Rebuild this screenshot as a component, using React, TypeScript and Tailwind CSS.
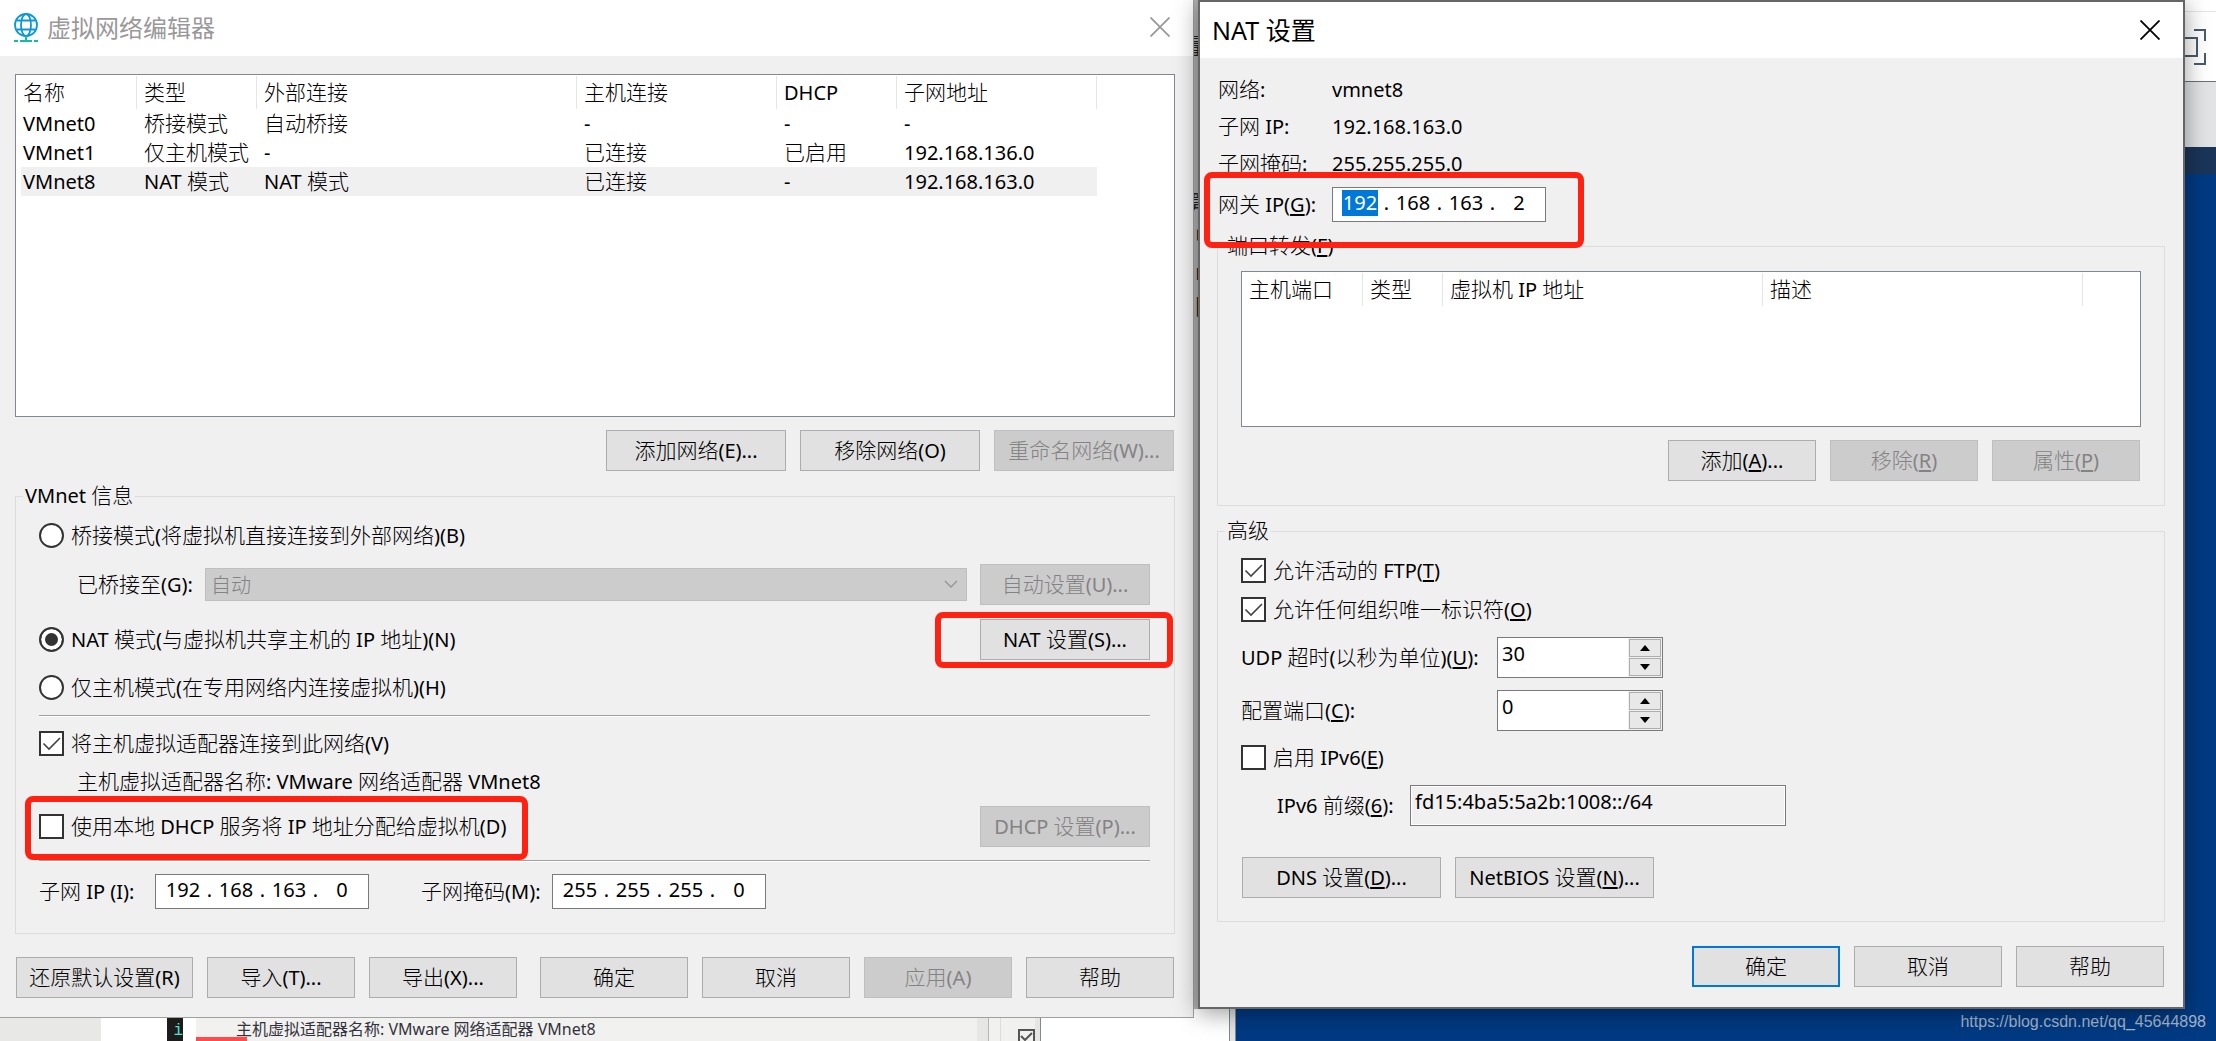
import type { ReactNode } from 'react';

/** Splits a caption into Chinese and Latin runs; "_X" underlines the access key X. */
function Caption({ text }: { text: string }) {
  const runs = text.split(/([\u4e00-\u9fff]+)/).filter(Boolean);
  return (
    <span className="whitespace-pre">
      {runs.map((run, i) => {
        if (/[\u4e00-\u9fff]/.test(run)) {
          return (
            <span key={i} className="font-['Noto_Sans_CJK_SC',sans-serif] text-[21px] leading-none font-light">
              {run}
            </span>
          );
        }
        const at = run.indexOf('_');
        if (at < 0) return <span key={i}>{run}</span>;
        return (
          <span key={i}>
            {run.slice(0, at)}
            <u className="underline-offset-2">{run[at + 1]}</u>
            {run.slice(at + 2)}
          </span>
        );
      })}
    </span>
  );
}

function Button({ text, width, disabled, primary }: { text: string; width: string; disabled?: boolean; primary?: boolean }) {
  const look = disabled
    ? 'border border-[#bfbfbf] bg-[#cccccc] text-[#838383]'
    : primary
      ? 'border-2 border-[#0078d7] bg-[#e1e1e1]'
      : 'border border-[#adadad] bg-[#e1e1e1]';
  return (
    <button type="button" disabled={disabled} className={`flex h-[41px] shrink-0 items-center justify-center ${width} ${look}`}>
      <Caption text={text} />
    </button>
  );
}

function Highlight({ place }: { place: string }) {
  return <span className={`pointer-events-none absolute z-10 rounded-lg border-6 border-[#ff2212] ${place}`} />;
}

function Radio({ text, checked }: { text: string; checked?: boolean }) {
  return (
    <label className="flex h-[25px] items-center gap-[7px]">
      <input
        type="radio"
        name="vmnet-mode"
        defaultChecked={checked}
        className="size-[25px] shrink-0 appearance-none rounded-full border-2 border-[#333333] bg-white checked:bg-[#333333] checked:shadow-[inset_0_0_0_4px_white]"
      />
      <Caption text={text} />
    </label>
  );
}

function Check({ text, checked, children }: { text: string; checked?: boolean; children?: ReactNode }) {
  return (
    <label className="relative flex h-[25px] w-fit items-center gap-[7px]">
      <span className="relative size-[25px] shrink-0">
        <input type="checkbox" defaultChecked={checked} className="peer block size-full appearance-none border-2 border-[#333333] bg-white" />
        <svg viewBox="0 0 25 25" className="pointer-events-none absolute inset-0 hidden size-full peer-checked:block" fill="none" stroke="#444" strokeWidth="1.6">
          <path d="M4.5 12.5 L10 18 L21 7" />
        </svg>
      </span>
      <Caption text={text} />
      {children}
    </label>
  );
}

function IpField({ label, octets, selected }: { label: string; octets: string[]; selected?: number }) {
  return (
    <div role="group" aria-label={label} className="flex h-[35px] w-[214px] shrink-0 items-center border border-[#7a7a7a] bg-white px-[7px] pb-1">
      {octets.map((o, i) => (
        <span key={i} className="flex items-center">
          {i > 0 && <span className="w-[13px] text-center">.</span>}
          <input
            aria-label={`${label} ${i + 1}`}
            defaultValue={o}
            className={
              i === selected
                ? 'mx-[2px] h-[26px] w-9 bg-[#0078d7] text-center text-white outline-none'
                : 'h-[26px] w-10 text-center outline-none'
            }
          />
        </span>
      ))}
    </div>
  );
}

function Spinner({ id, value }: { id: string; value: string }) {
  return (
    <div className="flex h-[41px] w-[166px] border border-[#7a7a7a] bg-white">
      <input id={id} defaultValue={value} className="w-full min-w-0 flex-1 pb-2 pl-1 outline-none" />
      <div className="flex w-[34px] flex-col gap-px bg-[#f0f0f0] p-px">
        <button type="button" aria-label="增加" className="flex flex-1 items-center justify-center border border-[#adadad] bg-[#e8e8e8]">
          <svg viewBox="0 0 10 6" className="h-[6px] w-[10px]"><path d="M0 6 L5 0 L10 6Z" /></svg>
        </button>
        <button type="button" aria-label="减少" className="flex flex-1 items-center justify-center border border-[#adadad] bg-[#e8e8e8]">
          <svg viewBox="0 0 10 6" className="h-[6px] w-[10px]"><path d="M0 0 L5 6 L10 0Z" /></svg>
        </button>
      </div>
    </div>
  );
}

function CloseIcon() {
  return (
    <svg viewBox="0 0 20 20" className="size-5" fill="none" stroke="currentColor" strokeWidth="1.8">
      <path d="M0.5 0.5 L19.5 19.5 M19.5 0.5 L0.5 19.5" />
    </svg>
  );
}

function NetworkIcon() {
  return (
    <svg viewBox="0 0 24 29" className="h-[29px] w-6 shrink-0" fill="none" strokeWidth="1.8">
      <g stroke="#0c98d6">
        <circle cx="12" cy="12" r="11" />
        <ellipse cx="12" cy="12" rx="5" ry="11" />
        <path d="M2.5 7.5 H21.5 M2.5 16.5 H21.5" />
      </g>
      <path stroke="#0bc0a4" strokeWidth="2" d="M12 23 V28 M6 28 H18 M0 28 H4 M20 28 H24" />
    </svg>
  );
}

function Divider() {
  return <hr className="h-[2px] border-t border-b border-t-[#a0a0a0] border-b-white" />;
}

function HeadCell({ text, width }: { text: string; width: string }) {
  return (
    <th className={`h-[33px] border-r border-[#e5e5e5] pl-[7px] text-left font-normal ${width}`}>
      <Caption text={text} />
    </th>
  );
}

const networks = [
  ['VMnet0', '桥接模式', '自动桥接', '-', '-', '-'],
  ['VMnet1', '仅主机模式', '-', '已连接', '已启用', '192.168.136.0'],
  ['VMnet8', 'NAT 模式', 'NAT 模式', '已连接', '-', '192.168.163.0'],
];

function NetworkEditor() {
  return (
    <section className="min-w-0 border-r border-b border-[#a0a0a0] bg-[#f0f0f0]">
      <header className="flex h-14 items-center gap-[9px] bg-white pr-[23px] pb-[2px] pl-[14px] text-[#999999]">
        <NetworkIcon />
        <h1 className="flex-1 font-['Noto_Sans_CJK_SC',sans-serif] text-2xl leading-6">虚拟网络编辑器</h1>
        <button type="button" aria-label="关闭"><CloseIcon /></button>
      </header>

      <div className="pt-[18px] pr-[18px] pb-[19px] pl-[15px]">
        <div className="h-[343px] border border-[#828790] bg-white pt-px">
          <table className="table-fixed border-separate border-spacing-0">
            <thead>
              <tr>
                <HeadCell text="名称" width="w-[121px]" />
                <HeadCell text="类型" width="w-[120px]" />
                <HeadCell text="外部连接" width="w-[320px]" />
                <HeadCell text="主机连接" width="w-[200px]" />
                <HeadCell text="DHCP" width="w-[120px]" />
                <HeadCell text="子网地址" width="w-[200px]" />
              </tr>
            </thead>
            <tbody>
              {networks.map((row, r) => (
                <tr key={row[0]} className={r === 2 ? 'bg-[#f0f0f0]' : ''}>
                  {row.map((cell, c) => (
                    <td key={c} className={`h-[29px] ${c === 0 ? 'border-l-5 border-white pl-[2px]' : 'pl-[7px]'}`}>
                      <Caption text={cell} />
                    </td>
                  ))}
                </tr>
              ))}
            </tbody>
          </table>
        </div>

        <div className="mt-[13px] flex justify-end gap-[14px] pr-px">
          <Button text="添加网络(E)..." width="w-[180px]" />
          <Button text="移除网络(O)" width="w-[180px]" />
          <Button text="重命名网络(W)..." width="w-[180px]" disabled />
        </div>

        <fieldset className="mt-[13px] border border-[#dcdcdc] pr-6 pb-6 pl-[23px]">
          <legend className="-ml-4 px-[2px]"><Caption text="VMnet 信息" /></legend>
          <div className="pt-[15px]">
            <Radio text="桥接模式(将虚拟机直接连接到外部网络)(B)" />
          </div>
          <div className="mt-4 flex items-center pl-[38px]">
            <label htmlFor="bridge" className="w-[128px]"><Caption text="已桥接至(G):" /></label>
            <div className="relative mr-[13px] flex-1">
              <select
                id="bridge"
                disabled
                className="block h-[33px] w-full appearance-none border border-[#bfbfbf] bg-[#cccccc] pl-[5px] font-['Noto_Sans_CJK_SC',sans-serif] text-[20px] leading-6 font-light text-[#838383] opacity-100"
              >
                <option>自动</option>
              </select>
              <svg viewBox="0 0 14 8" className="pointer-events-none absolute top-3 right-[9px] h-2 w-[14px]" fill="none" stroke="#959595" strokeWidth="1.4">
                <path d="M1 1 L7 7 L13 1" />
              </svg>
            </div>
            <Button text="自动设置(U)..." width="w-[170px]" disabled />
          </div>
          <div className="mt-[14px] flex items-center justify-between">
            <Radio text="NAT 模式(与虚拟机共享主机的 IP 地址)(N)" checked />
            <div className="relative">
              <Button text="NAT 设置(S)..." width="w-[170px]" />
              <Highlight place="-top-[7px] -right-[23px] -bottom-2 -left-[45px]" />
            </div>
          </div>
          <div className="mt-[15px] mb-[15px]">
            <Radio text="仅主机模式(在专用网络内连接虚拟机)(H)" />
          </div>
          <Divider />
          <div className="mt-[14px]">
            <Check text="将主机虚拟适配器连接到此网络(V)" checked />
          </div>
          <p className="mt-[14px] h-6 pl-[38px]"><Caption text="主机虚拟适配器名称: VMware 网络适配器 VMnet8" /></p>
          <div className="mt-3 mb-[13px] flex items-center justify-between">
            <Check text="使用本地 DHCP 服务将 IP 地址分配给虚拟机(D)">
              <Highlight place="-top-[18px] -right-[22px] -bottom-[21px] -left-[14px]" />
            </Check>
            <Button text="DHCP 设置(P)..." width="w-[170px]" disabled />
          </div>
          <Divider />
          <div className="mt-3 flex items-center">
            <span className="w-[116px]"><Caption text="子网 IP (I):" /></span>
            <IpField label="子网 IP" octets={['192', '168', '163', '0']} />
            <span className="ml-[52px] w-[131px]"><Caption text="子网掩码(M):" /></span>
            <IpField label="子网掩码" octets={['255', '255', '255', '0']} />
          </div>
        </fieldset>

        <footer className="mt-[23px] flex justify-between pr-px pl-px">
          <div className="flex gap-[14px]">
            <Button text="还原默认设置(R)" width="w-[177px]" />
            <Button text="导入(T)..." width="w-[148px]" />
            <Button text="导出(X)..." width="w-[148px]" />
          </div>
          <div className="flex gap-[14px]">
            <Button text="确定" width="w-[148px]" />
            <Button text="取消" width="w-[148px]" />
            <Button text="应用(A)" width="w-[148px]" disabled />
            <Button text="帮助" width="w-[148px]" />
          </div>
        </footer>
      </div>
    </section>
  );
}

function NatSettings() {
  return (
    <section className="z-10 min-w-0 border-2 border-[#666666] bg-[#f0f0f0] shadow-[0_4px_22px_rgba(0,0,0,0.4)]">
      <header className="flex h-14 items-center justify-between bg-white pr-[23px] pl-3 text-[25px]">
        <h2 className="font-['Noto_Sans','Noto_Sans_CJK_SC',sans-serif]">NAT 设置</h2>
        <button type="button" aria-label="关闭"><CloseIcon /></button>
      </header>

      <div className="pt-5 pr-[18px] pb-5 pl-[17px]">
        <dl className="grid grid-cols-[114px_1fr] gap-y-[13px] pl-px">
          <dt className="h-6"><Caption text="网络:" /></dt>
          <dd>vmnet8</dd>
          <dt className="h-6"><Caption text="子网 IP:" /></dt>
          <dd>192.168.163.0</dd>
          <dt className="h-6"><Caption text="子网掩码:" /></dt>
          <dd>255.255.255.0</dd>
        </dl>
        <div className="relative mt-[11px] flex w-fit items-center pl-px">
          <span className="w-[114px]"><Caption text="网关 IP(_G):" /></span>
          <IpField label="网关 IP" octets={['192', '168', '163', '2']} selected={0} />
          <Highlight place="-top-[15px] -right-[38px] -bottom-[26px] -left-[13px]" />
        </div>

        <fieldset className="mt-3 border border-[#dcdcdc] px-[23px] pb-6">
          <legend className="-ml-4 px-[2px]"><Caption text="端口转发(_F)" /></legend>
          <div className="mt-[13px] h-[156px] border border-[#828790] bg-white pt-px">
            <table className="table-fixed border-separate border-spacing-0">
              <thead>
                <tr>
                  <HeadCell text="主机端口" width="w-[121px]" />
                  <HeadCell text="类型" width="w-[80px]" />
                  <HeadCell text="虚拟机 IP 地址" width="w-[320px]" />
                  <HeadCell text="描述" width="w-[320px]" />
                </tr>
              </thead>
            </table>
          </div>
          <div className="mt-[13px] flex justify-end gap-[14px] pr-px">
            <Button text="添加(_A)..." width="w-[148px]" />
            <Button text="移除(_R)" width="w-[148px]" disabled />
            <Button text="属性(_P)" width="w-[148px]" disabled />
          </div>
        </fieldset>

        <fieldset className="mt-[13px] border border-[#dcdcdc] px-[23px] pb-[23px]">
          <legend className="-ml-4 px-[2px]"><Caption text="高级" /></legend>
          <div className="flex flex-col gap-[14px] pt-[15px]">
            <Check text="允许活动的 FTP(_T)" checked />
            <Check text="允许任何组织唯一标识符(_O)" checked />
          </div>
          <div className="mt-[15px] grid grid-cols-[256px_1fr] items-center gap-y-3">
            <label htmlFor="udp"><Caption text="UDP 超时(以秒为单位)(_U):" /></label>
            <Spinner id="udp" value="30" />
            <label htmlFor="port"><Caption text="配置端口(_C):" /></label>
            <Spinner id="port" value="0" />
          </div>
          <div className="mt-[14px]">
            <Check text="启用 IPv6(_E)" />
          </div>
          <div className="mt-[15px] flex items-center pl-9">
            <label htmlFor="prefix" className="w-[133px]"><Caption text="IPv6 前缀(_6):" /></label>
            <input
              id="prefix"
              readOnly
              defaultValue="fd15:4ba5:5a2b:1008::/64"
              className="h-[41px] w-[376px] border border-[#7a7a7a] bg-[#f0f0f0] pb-2 pl-1 shadow-[inset_0_0_0_1px_white] outline-none"
            />
          </div>
          <div className="mt-[31px] flex gap-[14px] pl-px">
            <Button text="DNS 设置(_D)..." width="w-[199px]" />
            <Button text="NetBIOS 设置(_N)..." width="w-[199px]" />
          </div>
        </fieldset>

        <footer className="mt-6 flex justify-end gap-[14px] pr-px">
          <Button text="确定" width="w-[148px]" primary />
          <Button text="取消" width="w-[148px]" />
          <Button text="帮助" width="w-[148px]" />
        </footer>
      </div>
    </section>
  );
}

/** The desktop and browser pieces that show around the two dialogs. */
function Backdrop() {
  return (
    <div className="absolute inset-0 flex overflow-hidden">
      <div className="relative flex flex-[1236] flex-col justify-end bg-[#b0b0b0]">
        <div className="absolute inset-y-0 right-[37px] w-0 font-['Noto_Sans_CJK_SC',sans-serif] text-[22px] leading-6 text-[#222222]">
          <span className="absolute top-8 -left-3">量</span>
          <span className="absolute top-[188px] -left-3">算</span>
          <span className="absolute top-[222px] -left-1">中</span>
          <span className="absolute top-[258px] -left-1">n</span>
          <span className="absolute top-[292px] -left-1">网</span>
        </div>
        <div className="flex h-8 items-stretch bg-white">
          <div className="w-[101px] bg-[#e8e8e6]" />
          <div className="w-[66px] bg-white" />
          <div className="flex w-4 items-end justify-end bg-[#1c1c1a] font-['Liberation_Mono',monospace] text-base leading-5 text-[#4fe0d8]">i</div>
          <div className="w-[13px] bg-white" />
          <div className="relative flex flex-1 items-end bg-[#f1f1ef] pl-10 font-['Noto_Sans','Noto_Sans_CJK_SC',sans-serif] text-base leading-[23px] text-[#33333d]">
            <span className="absolute bottom-0 left-0 h-1 w-[51px] bg-[#ff4b4b]" />
            主机虚拟适配器名称: VMware 网络适配器 VMnet8
          </div>
          <div className="w-3 border-r border-[#b5b5b5] bg-[#e6e6e4]" />
          <div className="w-3 border-r border-[#dddddd] bg-[#f1f1ef]" />
          <div className="flex w-[34px] items-end justify-end bg-[#f1f1ef]">
            <svg viewBox="0 0 17 12" className="h-3 w-[17px]" fill="none" stroke="#555" strokeWidth="2">
              <path d="M1 12 V1 H16 V12 M3 7 L7 11 L14 4" />
            </svg>
          </div>
          <div className="w-[6px] border-r border-[#828790] bg-[#e6e6e4]" />
          <div className="w-[188px] bg-white" />
          <div className="w-[7px] border-x border-[#828790] bg-[#e2e3e5]" />
        </div>
      </div>
      <div className="flex flex-[980] flex-col items-stretch bg-[#003a82]">
        <div className="flex h-[82px] flex-col border-b border-[#707070] bg-white">
          <div className="h-3 border-b border-[#e5e5e5]" />
          <div className="flex flex-1 items-center justify-end pr-[9px]">
            <svg viewBox="0 0 26 38" className="h-[38px] w-[26px]" fill="none" stroke="#4a5b68" strokeWidth="2">
              <path d="M13 2 H24 V13 M24 25 V36 H13 M0 10 H16 V28 H0" />
            </svg>
          </div>
        </div>
        <div className="h-[65px] bg-[#e2e3e5]" />
        <div className="h-[27px] bg-[#1a3558]" />
      </div>
    </div>
  );
}

export default function App() {
  return (
    <main className="relative min-h-screen overflow-hidden bg-[#003a82] font-['Noto_Sans','Noto_Sans_CJK_SC',sans-serif] text-[20px] leading-6 text-black">
      <Backdrop />
      <div className="relative mr-[31px] grid grid-cols-[1194fr_987fr] items-start gap-1">
        <NetworkEditor />
        <NatSettings />
      </div>
      <a
        href="https://blog.csdn.net/qq_45644898"
        className="absolute right-[10px] bottom-[9px] font-['Liberation_Sans',sans-serif] text-base leading-5 text-[#a3b4cc]"
      >
        https://blog.csdn.net/qq_45644898
      </a>
    </main>
  );
}
